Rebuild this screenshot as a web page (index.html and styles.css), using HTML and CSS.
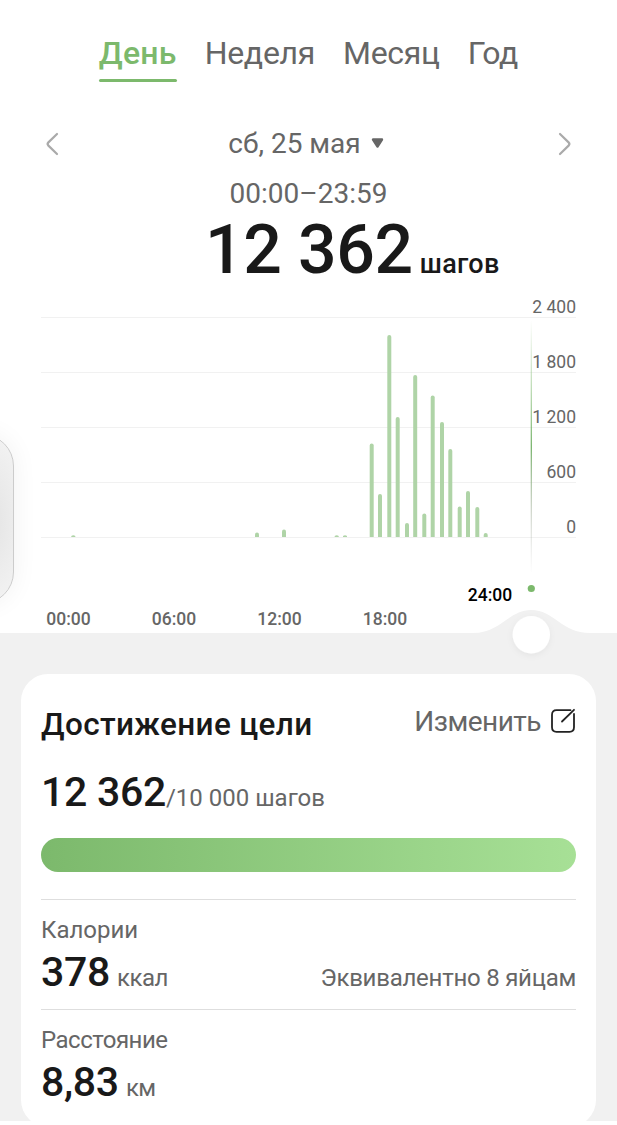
FILE: index.html
```html
<!DOCTYPE html>
<html lang="ru">
  <head>
    <meta charset="UTF-8" />
    <meta name="viewport" content="width=device-width, initial-scale=1.0" />
    <title>Шаги</title>
    <link rel="stylesheet" href="styles.css">
  </head>
  <body>
    <div class="screen">
      <nav class="tabs">
        <a class="tab active">День</a>
        <a class="tab">Неделя</a>
        <a class="tab">Месяц</a>
        <a class="tab">Год</a>
      </nav>

      <div class="date-row">
        <svg class="arrow" width="14" height="24" viewBox="0 0 14 24"><path d="M12 2 L3.4 10.4 Q1.8 12 3.4 13.6 L12 22" /></svg>
        <div class="date">
          <span>сб, 25 мая</span>
          <svg width="13" height="13" viewBox="0 0 13 13"><path d="M2 1.5 H11 L6.5 8.5 Z" fill="#666" stroke="#666" stroke-width="2.4" stroke-linejoin="round" /></svg>
        </div>
        <svg class="arrow" width="14" height="24" viewBox="0 0 14 24"><path d="M2 2 L10.6 10.4 Q12.2 12 10.6 13.6 L2 22" /></svg>
      </div>
      <div class="range">00:00–23:59</div>
      <div class="total"><span class="total-value">12 362</span><span class="total-unit">шагов</span></div>

      <svg class="chart" width="617" height="384" viewBox="0 290 617 384">
        <defs>
          <linearGradient id="cursor" x1="0" y1="0" x2="0" y2="1">
            <stop offset="0" stop-color="#7cb96c" stop-opacity="0" />
            <stop offset="0.25" stop-color="#7cb96c" stop-opacity="0.5" />
            <stop offset="0.5" stop-color="#6fae62" />
            <stop offset="0.75" stop-color="#9aa890" stop-opacity="0.5" />
            <stop offset="1" stop-color="#aaa" stop-opacity="0" />
          </linearGradient>
          <filter id="knob-shadow" x="-50%" y="-50%" width="200%" height="200%">
            <feDropShadow dx="0" dy="2" stdDeviation="3" flood-opacity="0.05" />
          </filter>
        </defs>

        <!-- grid -->
        <path class="grid" d="M41 317.5H576M41 372.5H576M41 427.5H576M41 482.5H576M41 537.5H576" />

        <!-- steps per half hour -->
        <g class="bars">
          <path d="M71.3 537v-1q2-1.6 4 0v1z" />
          <path d="M255 537v-2.5a2 2 0 0 1 4 0v2.5z" />
          <path d="M282 537v-5.500a2 2 0 0 1 4 0v5.500z" />
          <path d="M334.700 537v-1q2-1.6 4 0v1z" />
          <path d="M343 537v-1q2-1.6 4 0v1z" />
          <path d="M369.700 537v-91.500a2 2 0 0 1 4 0v91.500z" />
          <path d="M378 537v-41a2 2 0 0 1 4 0v41z" />
          <path d="M387.300 537v-200a2 2 0 0 1 4 0v200z" />
          <path d="M395.700 537v-118a2 2 0 0 1 4 0v118z" />
          <path d="M405 537v-12a2 2 0 0 1 4 0v12z" />
          <path d="M413.200 537v-160a2 2 0 0 1 4 0v160z" />
          <path d="M422.300 537v-21.500a2 2 0 0 1 4 0v21.500z" />
          <path d="M430.700 537v-139.500a2 2 0 0 1 4 0v139.500z" />
          <path d="M440 537v-113a2 2 0 0 1 4 0v113z" />
          <path d="M448.300 537v-86a2 2 0 0 1 4 0v86z" />
          <path d="M457.700 537v-28.500a2 2 0 0 1 4 0v28.500z" />
          <path d="M466 537v-44a2 2 0 0 1 4 0v44z" />
          <path d="M475.300 537v-28a2 2 0 0 1 4 0v28z" />
          <path d="M483.700 537v-2a2 2 0 0 1 4 0v2z" />
        </g>

        <g class="y-labels">
          <text x="576" y="313">2 400</text>
          <text x="576" y="368.300">1 800</text>
          <text x="576" y="423.200">1 200</text>
          <text x="576" y="478">600</text>
          <text x="576" y="533">0</text>
        </g>
        <g class="x-labels">
          <text x="68.500" y="625">00:00</text>
          <text x="174" y="625">06:00</text>
          <text x="279.500" y="625">12:00</text>
          <text x="385" y="625">18:00</text>
          <text class="current" x="490" y="601">24:00</text>
        </g>

        <!-- time slider -->
        <rect x="530.700" y="320" width="1.200" height="254" fill="url(#cursor)" />
        <circle cx="531.300" cy="588.500" r="3.600" fill="#7cb96c" />
        <path d="M0 633H473C500 633 509 610 531.300 610C553.500 610 562 633 590 633H617V674H0Z" fill="#f1f1f1" />
        <circle cx="531.300" cy="634.700" r="18.700" fill="#fff" filter="url(#knob-shadow)" />
      </svg>

      <main class="details">
        <section class="card">
          <div class="card-head">
            <h2>Достижение цели</h2>
            <a class="edit">
              <span>Изменить</span>
              <svg width="26" height="26" viewBox="0 0 26 26"><path d="M20.500 2.200H6.500Q2 2.200 2 6.700V19.300Q2 23.800 6.500 23.800H19.500Q24 23.800 24 19.300V6M12 13.500L24 1.800" /></svg>
            </a>
          </div>
          <div class="goal"><b>12 362</b><span class="target">/10 000 шагов</span></div>
          <div class="progress"></div>
          <div class="stat">
            <div class="label">Калории</div>
            <div class="stat-row">
              <div><b>378</b><span class="unit">ккал</span></div>
              <span class="equal">Эквивалентно 8 яйцам</span>
            </div>
          </div>
          <div class="stat">
            <div class="label distance">Расстояние</div>
            <div class="stat-row">
              <div><b>8,83</b><span class="unit">км</span></div>
            </div>
          </div>
        </section>
      </main>

      <div class="side-panel"></div>
    </div>
  </body>
</html>
```

FILE: styles.css
```css
* {
  box-sizing: border-box;
}
body {
  margin: 0;
  background-color: #fff;
  font-family: Roboto, "Noto Sans", sans-serif;
  color: #666;
}
.screen {
  position: relative;
  width: 617px;
  height: 1121px;
  overflow: hidden;
}
.tabs {
  display: flex;
  justify-content: center;
  gap: 28px;
  height: 83px;
  padding-top: 31px;
}
.tab {
  height: 52px;
  font-size: 32px;
  line-height: 44px;
  letter-spacing: -0.3px;
}
.tab.active {
  position: relative;
  color: #7cb96c;
  font-weight: 500;
  letter-spacing: 0.2px;
}
.tab.active::after {
  content: "";
  position: absolute;
  left: 0;
  right: 0;
  bottom: 1px;
  height: 3px;
  border-radius: 2px;
  background-color: #7cb96c;
}
.date-row {
  display: flex;
  justify-content: space-between;
  align-items: center;
  height: 50px;
  margin-top: 36px;
  padding: 0 45px;
}
.arrow {
  fill: none;
  stroke: #aaa;
  stroke-width: 2.2;
  stroke-linecap: round;
}
.date {
  display: flex;
  align-items: center;
  gap: 10px;
  padding-right: 5px;
  font-size: 28px;
  line-height: 50px;
}
.range {
  height: 50px;
  font-size: 28px;
  line-height: 50px;
  text-align: center;
}
.total {
  height: 71px;
  padding-left: 205px;
  line-height: 62px;
  color: #191919;
  white-space: nowrap;
}
.total-value {
  font-size: 68px;
  font-weight: 500;
  letter-spacing: -0.4px;
}
.total-unit {
  margin-left: 7px;
  font-size: 27px;
  font-weight: 500;
  letter-spacing: 0.3px;
}
.chart {
  display: block;
}
.grid {
  stroke: #f1f1f1;
  stroke-width: 1;
}
.bars {
  fill: #afd4a7;
}
.y-labels {
  font-size: 17.5px;
  text-anchor: end;
  fill: #666;
}
.x-labels {
  font-size: 17.5px;
  font-weight: 500;
  text-anchor: middle;
  fill: #666;
}
.current {
  fill: #000;
}
.details {
  height: 447px;
  padding: 0 21px;
  background-color: #f1f1f1;
}
.card {
  height: 453px;
  padding: 0 20px;
  border-radius: 27px;
  background-color: #fff;
}
.card-head {
  display: flex;
  justify-content: space-between;
  height: 88px;
  padding-top: 22px;
}
h2 {
  margin: 0;
  padding-top: 5px;
  font-size: 31.5px;
  font-weight: 500;
  line-height: 48px;
  letter-spacing: 0.35px;
  color: #191919;
}
.edit {
  display: flex;
  align-items: center;
  gap: 9px;
  height: 50px;
  font-size: 28px;
  letter-spacing: -0.5px;
}
.edit svg {
  fill: none;
  stroke: #222;
  stroke-width: 1.8;
  stroke-linecap: round;
}
.goal {
  height: 76px;
  padding-top: 2px;
  line-height: 56px;
  white-space: nowrap;
}
b {
  font-size: 41px;
  font-weight: 500;
  letter-spacing: -0.3px;
  color: #191919;
}
.target {
  font-size: 24px;
}
.progress {
  height: 34px;
  margin-bottom: 27px;
  border-radius: 18px;
  background: linear-gradient(90deg, #7cb96c, #a7e096);
}
.stat {
  height: 110px;
  padding-top: 14px;
  border-top: 1px solid #dedede;
}
.label {
  font-size: 24px;
  line-height: 32px;
}
.distance {
  letter-spacing: -0.5px;
}
.stat-row {
  display: flex;
  justify-content: space-between;
  align-items: baseline;
  line-height: 52px;
  font-size: 24px;
}
.unit {
  margin-left: 7px;
  letter-spacing: -0.5px;
}
.equal {
  letter-spacing: -0.25px;
}
/* edge of the floating system panel */
.side-panel {
  position: absolute;
  left: -90px;
  top: 434px;
  width: 104px;
  height: 170px;
  border: 1px solid #ccc;
  border-radius: 32px;
  background: radial-gradient(ellipse 35px 85px at 82px 85px, #e4e4e4, #f2f2f2);
  box-shadow: 0 0 26px rgba(0, 0, 0, 0.06);
}
```
